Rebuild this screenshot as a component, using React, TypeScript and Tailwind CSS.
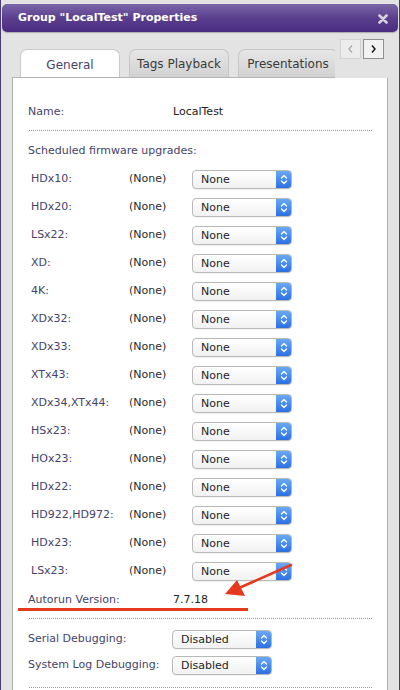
import React from "react";

const firmware = [
  "HDx10:",
  "HDx20:",
  "LSx22:",
  "XD:",
  "4K:",
  "XDx32:",
  "XDx33:",
  "XTx43:",
  "XDx34,XTx44:",
  "HSx23:",
  "HOx23:",
  "HDx22:",
  "HD922,HD972:",
  "HDx23:",
  "LSx23:",
];

function Select({ value }: { value: string }) {
  return (
    <div className="flex h-[19px] w-[100px] items-stretch rounded-[4px] border border-[#b9b9b9] bg-gradient-to-b from-white to-[#f1f1f1] shadow-[0_1px_0_rgba(0,0,0,0.05)]">
      <span className="flex-1 pl-[8px] text-[11px] leading-[17px] text-[#1e1e1e]">{value}</span>
      <span className="flex w-[15px] items-center justify-center rounded-r-[3px] bg-gradient-to-b from-[#6aa9f7] to-[#2c6fe3]">
        <svg width="8" height="11" viewBox="0 0 8 11" fill="none" stroke="white" strokeWidth="1.3" strokeLinecap="round" strokeLinejoin="round">
          <path d="M1.5 4 L4 1.5 L6.5 4" />
          <path d="M1.5 7 L4 9.5 L6.5 7" />
        </svg>
      </span>
    </div>
  );
}

function Dots() {
  return <div className="ml-[1px] w-[343px] border-t border-dotted border-[#9a9a9a]" />;
}

export default function App() {
  return (
    <div className="relative h-[690px] w-[400px] overflow-hidden border-r border-l border-[#4a3a78] bg-[#e3e3e3] font-['DejaVu_Sans',sans-serif]">
      {/* title bar */}
      <div className="mx-[1px] mt-[4px] flex h-[28px] items-center justify-between rounded-[5px] bg-gradient-to-b from-[#7b66a8] via-[#5b3f8e] to-[#4a2c80] pl-[16px] pr-[10px] pt-[1px] shadow-[0_1px_1px_rgba(0,0,0,0.25)]">
        <span className="text-[11px] font-bold text-white">Group "LocalTest" Properties</span>
        <svg width="10" height="10" viewBox="0 0 10 10" stroke="#d6d3de" strokeWidth="2.6" strokeLinecap="round">
          <path d="M1.5 1.5 L8.5 8.5 M8.5 1.5 L1.5 8.5" />
        </svg>
      </div>

      {/* tab strip */}
      <div className="mt-[7px] flex h-[39px] pl-[11px]">
        <div className="flex w-[323px] items-end gap-[9px] overflow-hidden border-b border-[#b5b5b5] pl-[8px]">
          <div className="-mb-[1px] flex h-[29px] w-[100px] shrink-0 items-center justify-center rounded-t-[7px] border border-b-0 border-[#c9c9c9] bg-white pt-[2px] text-[12px] text-[#45436b]">
            General
          </div>
          <div className="flex h-[28px] w-[100px] shrink-0 items-center justify-center rounded-t-[7px] border border-b-0 border-[#c6c6c6] bg-gradient-to-b from-[#e6e6e6] to-[#d2d2d2] pt-[1px] text-[12px] text-[#3a3a3a]">
            Tags Playback
          </div>
          <div className="flex h-[28px] w-[100px] shrink-0 items-center justify-center rounded-t-[7px] border border-b-0 border-[#c6c6c6] bg-gradient-to-b from-[#e6e6e6] to-[#d2d2d2] pt-[1px] text-[12px] text-[#3a3a3a]">
            Presentations
          </div>
        </div>
        <div className="ml-[5px] flex gap-[2px]">
          <div className="flex h-[20px] w-[21px] items-center justify-center border border-[#d2d2d2] bg-[#ececec]">
            <svg width="7" height="10" viewBox="0 0 7 10" fill="none" stroke="#a8a8a8" strokeWidth="1.2">
              <path d="M5 1.5 L2 5 L5 8.5" />
            </svg>
          </div>
          <div className="flex h-[20px] w-[21px] items-center justify-center border border-[#8f8f8f] bg-[#f2f2f2]">
            <svg width="7" height="10" viewBox="0 0 7 10" fill="none" stroke="#111" strokeWidth="1.4">
              <path d="M2 1.5 L5 5 L2 8.5" />
            </svg>
          </div>
        </div>
      </div>

      {/* panel */}
      <div className="ml-[11px] h-[620px] w-[376px] border-x border-[#b0b0b0] bg-white pl-[15px] pt-[24px]">
        <div className="flex h-[20px] items-center text-[11px]">
          <span className="w-[145px] text-[#45436b]">Name:</span>
          <span className="text-[#222]">LocalTest</span>
        </div>
        <div className="mt-[8px]">
          <Dots />
        </div>
        <div className="mt-[10px] flex h-[20px] items-center text-[11px] text-[#45436b]">Scheduled firmware upgrades:</div>
        <div className="mt-[4px] pl-[3px]">
          {firmware.map((f) => (
            <div key={f} className="flex h-[28px] items-center text-[11px]">
              <span className="w-[98px] text-[#45436b]">{f}</span>
              <span className="w-[63px] text-[#2a2a2a]">(None)</span>
              <Select value="None" />
            </div>
          ))}
        </div>
        <div className="mt-[5px] flex h-[20px] items-center text-[11px]">
          <span className="w-[145px] text-[#45436b]">Autorun Version:</span>
          <span className="text-[#222]">7.7.18</span>
        </div>
        <div className="mt-[8px]">
          <Dots />
        </div>
        <div className="mt-[7px] flex h-[26px] items-center text-[11px]">
          <span className="w-[144px] text-[#45436b]">Serial Debugging:</span>
          <Select value="Disabled" />
        </div>
        <div className="flex h-[26px] items-center text-[11px]">
          <span className="w-[144px] text-[#45436b]">System Log Debugging:</span>
          <Select value="Disabled" />
        </div>
        <div className="mt-[9px]">
          <Dots />
        </div>
      </div>

      {/* red annotation */}
      <svg className="pointer-events-none absolute left-0 top-0" width="400" height="690">
        <rect x="17" y="608" width="230" height="3" fill="#e63a1e" />
        <line x1="290" y1="565" x2="238" y2="588" stroke="#e63a1e" strokeWidth="2.6" strokeLinecap="round" />
        <polygon points="224,594 236,580 244,596" fill="#e63a1e" />
      </svg>
    </div>
  );
}
